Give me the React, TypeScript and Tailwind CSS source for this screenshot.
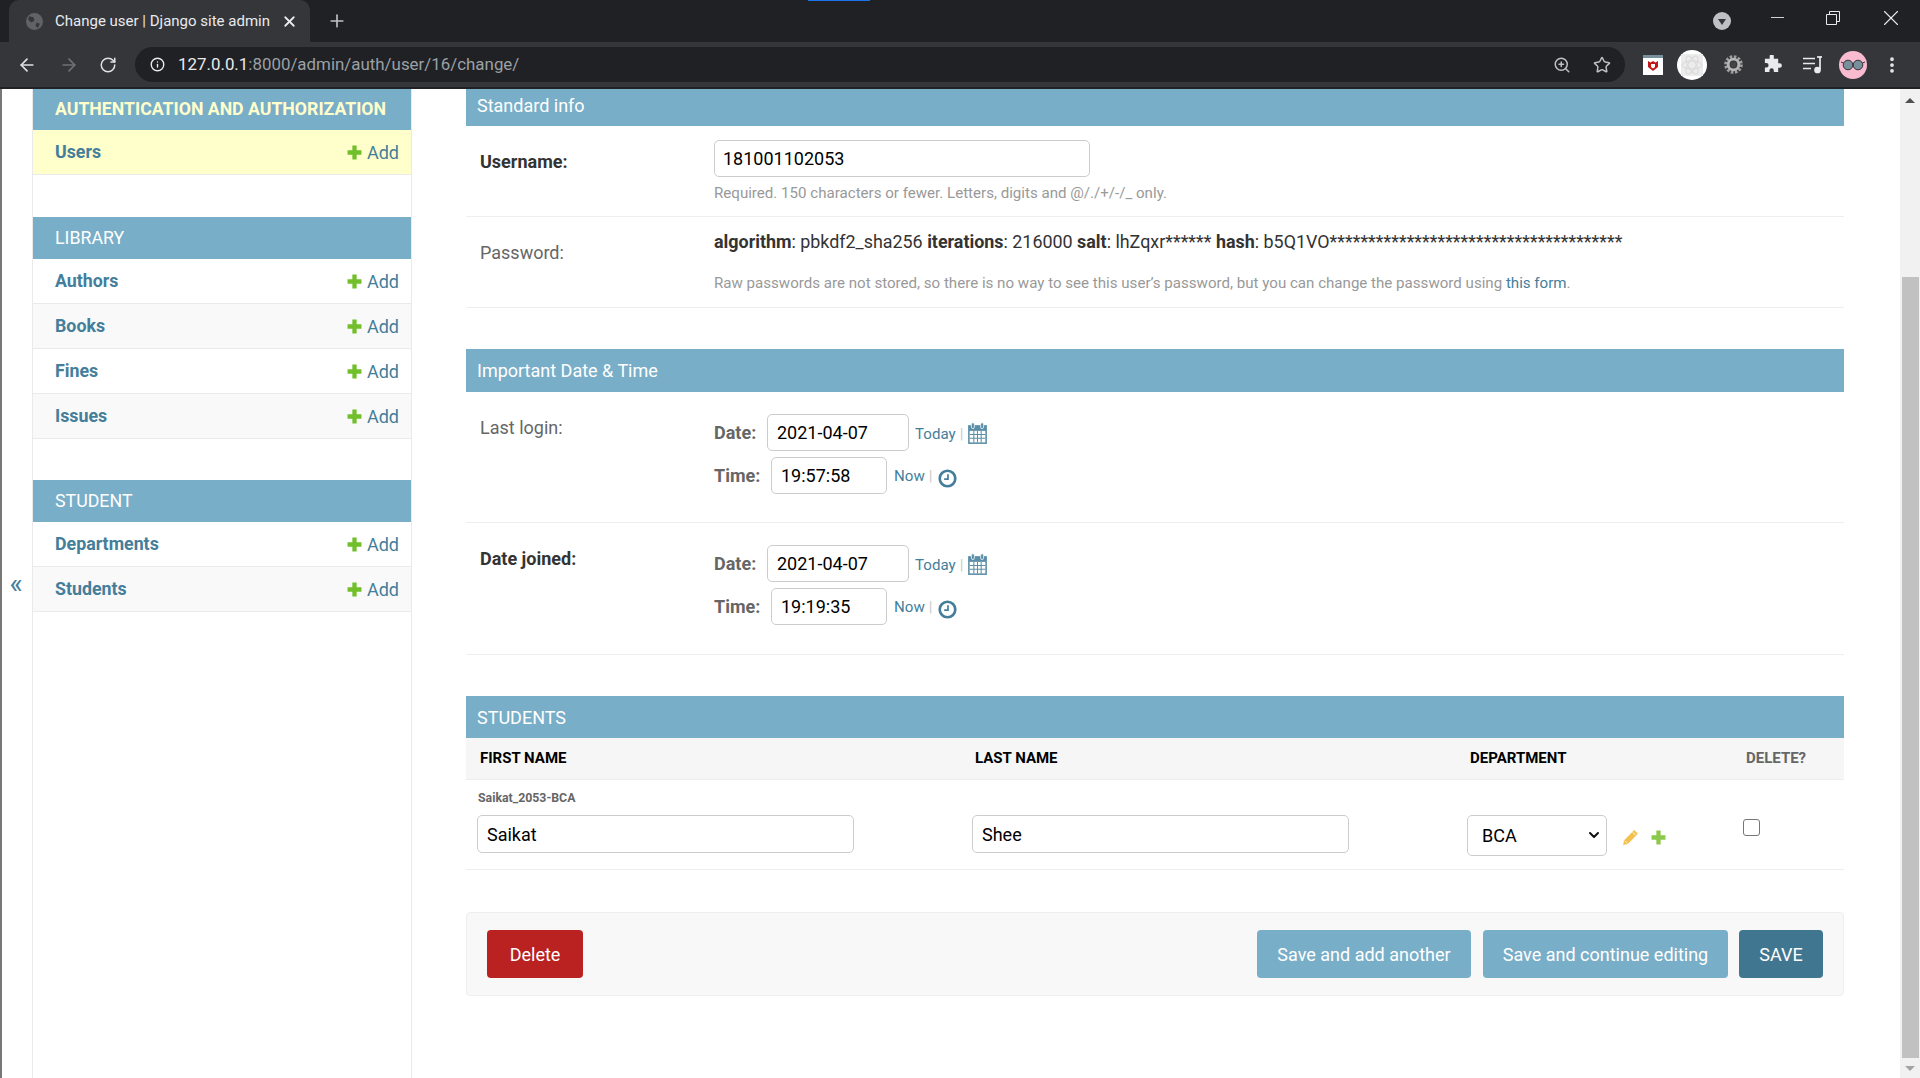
import React from "react";
import { ArrowLeft, ArrowRight, ChevronDown, RotateCw, Info, Star, ZoomIn, X, Plus, Minus, MoreVertical } from "lucide-react";

const roboto = "[font-family:Roboto,'Liberation_Sans',sans-serif]";

const PlusIcon = ({ className = "", fill = "#70bf2b" }: { className?: string; fill?: string }) => (
  <svg viewBox="0 0 14 14" className={className}>
    <path d="M5 0.500h4v4.500h4.500v4h-4.500v4.500h-4v-4.500h-4.500v-4h4.500z" fill={fill} />
  </svg>
);

const CalendarIcon = () => (
  <svg viewBox="0 0 20 22" className="w-[21px] h-[23px] ml-[4px] mt-[2px]">
    <path d="M1 3h18v18h-18z" fill="#5b8fa8" />
    <path d="M2.500 8.500h15v11h-15z" fill="#fff" />
    <path d="M2.500 12h15M2.500 15.500h15M6.500 8.500v11M10 8.500v11M13.500 8.500v11" stroke="#5b8fa8" strokeWidth="1" />
    <rect x="4.200" y="0.700" width="2.800" height="5.600" rx="1.400" fill="#5b8fa8" stroke="#fff" strokeWidth="0.700" />
    <rect x="13" y="0.700" width="2.800" height="5.600" rx="1.400" fill="#5b8fa8" stroke="#fff" strokeWidth="0.700" />
  </svg>
);

const ClockIcon = () => (
  <svg viewBox="0 0 20 20" className="w-[19px] h-[19px] ml-[6px] mt-[5px]">
    <circle cx="10" cy="10" r="8.200" fill="#fff" stroke="#447e9b" strokeWidth="2.800" />
    <path d="M10.500 5.500v5.200h-4" fill="none" stroke="#447e9b" strokeWidth="1.800" />
  </svg>
);

function SidebarRow({ name, alt, active }: { name: string; alt?: boolean; active?: boolean }) {
  return (
    <div
      className={`flex items-center justify-between h-[45px] border-b border-[#eaeaea] pl-[22px] pr-[12px] text-[18px] ${
        active ? "bg-[#ffffcc]" : alt ? "bg-[#f9f9f9]" : "bg-white"
      }`}
    >
      <span className="font-bold text-[#447e9b] text-[17.800px]">{name}</span>
      <span className="flex items-center text-[#447e9b] gap-[5px]">
        <PlusIcon className="w-[15px] h-[15px]" />
        Add
      </span>
    </div>
  );
}

function SidebarModule({
  title,
  rows,
  active,
  headerClass = "h-[42px]",
  className = "mb-[42px]",
}: {
  title: string;
  rows: string[];
  active?: boolean;
  headerClass?: string;
  className?: string;
}) {
  return (
    <div className={className}>
      <div
        className={`flex items-center bg-[#79aec8] pl-[22px] ${headerClass} ${
          active ? "font-bold text-[#ffffcc] text-[17.700px]" : "text-white text-[17.800px]"
        }`}
      >
        {title}
      </div>
      {rows.map((r, i) => (
        <SidebarRow key={r} name={r} alt={i % 2 === 1} active={active} />
      ))}
    </div>
  );
}

const SectionHeader = ({ title, className = "h-[42px]" }: { title: string; className?: string }) => (
  <div className={`flex items-center bg-[#79aec8] text-white text-[18px] pl-[11px] ${className}`}>{title}</div>
);

const textInput = "border border-[#cccccc] rounded-[5px] bg-white text-black text-[18px] outline-none";

function DateTimeRow({ date, time }: { date: string; time: string }) {
  return (
    <div className="flex flex-col gap-[6px] ml-[51px]">
      <div className="flex items-center h-[37px]">
        <span className="font-bold text-[18px] text-[#666] w-[53px]">Date:</span>
        <input readOnly value={date} className={`${textInput} pl-[9px] h-[37px] w-[142px]`} />
        <span className="ml-[6px] text-[15.100px] text-[#447e9b] mt-[3px]">Today</span>
        <span className="text-[15.100px] text-[#ccc] ml-[4px] mt-[3px]">|</span>
        <CalendarIcon />
      </div>
      <div className="flex items-center h-[37px]">
        <span className="font-bold text-[18px] text-[#666] w-[57px]">Time:</span>
        <input readOnly value={time} className={`${textInput} pl-[9px] h-[37px] w-[116px]`} />
        <span className="ml-[7px] text-[15.100px] text-[#447e9b] mt-[2px]">Now</span>
        <span className="text-[15.100px] text-[#ccc] ml-[4px] mt-[2px]">|</span>
        <ClockIcon />
      </div>
    </div>
  );
}

function BrowserChrome() {
  return (
    <div className="bg-[#202124] shrink-0">
      <div className="flex items-end h-[42px] pl-[9px] relative">
        <div className="flex items-center w-[301px] h-[42px] bg-[#35363a] rounded-t-[10px] pl-[17px] pr-[12px] text-[#e8eaed] text-[15px]">
          <svg viewBox="0 0 16 16" className="w-[17px] h-[17px] shrink-0 mr-[12px]">
            <circle cx="8" cy="8" r="8" fill="#5f6368" />
            <path d="M3 3l4 1 1 3-3 2-3-3zM10 9l3 1-2 4-2-2z" fill="#35363a" />
          </svg>
          <span className="whitespace-nowrap flex-1">Change user | Django site admin</span>
          <X size={17} strokeWidth={2.500} className="text-[#e8eaed]" />
        </div>
        <Plus size={20} strokeWidth={2} className="text-[#bdc1c6] ml-[17px] mb-[11px]" />
        <div className="absolute left-[808px] top-0 w-[62px] h-[1px] bg-[#1a73e8]" />
        <div className="ml-auto flex items-center h-[42px] text-[#e8eaed]">
          <svg viewBox="0 0 18 18" className="w-[18px] h-[18px] mr-[36px]">
            <circle cx="9" cy="9" r="9" fill="#bdc1c6" />
            <path d="M5 7h8l-4 6z" fill="#35363a" />
          </svg>
          <Minus size={21} strokeWidth={1} className="mr-[38px] -mt-[8px]" />
          <svg viewBox="0 0 14 14" className="w-[14px] h-[14px] mr-[38px] -mt-[6px]" fill="none" stroke="#e8eaed">
            <path d="M0.500 3.500h10v10h-10zM3.500 3.500v-3h10v10h-3" />
          </svg>
          <X size={26} strokeWidth={1} className="mr-[16px] -mt-[6px]" />
        </div>
      </div>
      <div className="flex items-center h-[47px] bg-[#35363a] border-b-2 border-[#202124] text-[#dee1e6]">
        <ArrowLeft size={20} className="ml-[17px]" />
        <ArrowRight size={20} className="ml-[22px] text-[#6f7175]" />
        <RotateCw size={18} className="ml-[20px]" />
        <div className="flex items-center ml-[18px] w-[1490px] h-[35px] bg-[#202124] rounded-full pl-[15px] pr-[14px]">
          <Info size={15} strokeWidth={2.200} className="text-[#e8eaed]" />
          <span className="ml-[13px] text-[16.900px] text-[#e8eaed]">
            127.0.0.1<span className="text-[#9aa0a6]">:8000/admin/auth/user/16/change/</span>
          </span>
          <ZoomIn size={18} className="ml-auto text-[#bdc1c6]" />
          <Star size={18} className="ml-[22px] text-[#bdc1c6]" />
        </div>
        <svg viewBox="0 0 20 20" className="w-[20px] h-[20px] ml-[18px]">
          <rect width="20" height="20" fill="#fff" />
          <rect width="20" height="3" fill="#78909c" />
          <path d="M5 6l2.500 1.500 2.500-1.500 2.500 1.500 2.500-1.500v6l-5 4-5-4z" fill="#c01818" />
          <path d="M8 9h4v3l-2 1.600-2-1.600z" fill="#fff" />
        </svg>
        <div className="flex items-center justify-center w-[30px] h-[30px] rounded-full bg-white ml-[14px]">
          <svg viewBox="0 0 24 24" className="w-[24px] h-[24px]" fill="none" stroke="#d8d8d8" strokeWidth="1">
            <rect x="1" y="1" width="22" height="22" fill="#ececec" stroke="none" />
            <ellipse cx="12" cy="12" rx="10" ry="4" />
            <ellipse cx="12" cy="12" rx="10" ry="4" transform="rotate(60 12 12)" />
            <ellipse cx="12" cy="12" rx="10" ry="4" transform="rotate(120 12 12)" />
          </svg>
        </div>
        <svg viewBox="0 0 20 20" className="w-[19px] h-[19px] ml-[17px]">
          <circle cx="10" cy="10" r="8" fill="none" stroke="#9e9e9e" strokeWidth="3.600" strokeDasharray="2.600 1.600" />
          <circle cx="10" cy="10" r="5.600" fill="none" stroke="#b5b5b5" strokeWidth="3" />
          <circle cx="10" cy="10" r="3" fill="#444" />
        </svg>
        <svg viewBox="0 0 20 20" className="w-[19px] h-[19px] ml-[20px]" fill="#e8eaed">
          <path d="M7 1.500a2.200 2.200 0 0 1 4.400 0V4h4.600v4.600h1.500a2.400 2.400 0 0 1 0 4.800H16V18h-4.600v-1.800a2.300 2.300 0 0 0-4.600 0V18H2v-4.900h1.500a2.400 2.400 0 0 0 0-4.800H2V4h5z" />
        </svg>
        <svg viewBox="0 0 20 20" className="w-[20px] h-[20px] ml-[21px]" fill="none" stroke="#e8eaed" strokeWidth="1.700">
          <path d="M0 3.500h12M0 8.500h12M0 13.500h8" />
          <path d="M17 1.500v13" />
          <path d="M14 2h5" />
          <circle cx="14.500" cy="15" r="2.500" fill="#e8eaed" />
        </svg>
        <div className="flex items-center justify-center w-[28px] h-[28px] rounded-full bg-[#f8bbd0] ml-[16px]">
          <svg viewBox="0 0 24 12" className="w-[24px] h-[12px]">
            <circle cx="7" cy="6" r="4.800" fill="#78909c" stroke="#333" strokeWidth="1" />
            <circle cx="17" cy="6" r="4.800" fill="#78909c" stroke="#333" strokeWidth="1" />
            <path d="M0 3l2.500 1M24 3l-2.500 1M11.500 5h1" stroke="#333" strokeWidth="1" />
          </svg>
        </div>
        <MoreVertical size={20} strokeWidth={2.500} className="ml-[15px] text-[#e8eaed]" />
      </div>
    </div>
  );
}

export default function App() {
  return (
    <div className={`h-screen w-full flex flex-col overflow-hidden bg-white text-[#333] ${roboto}`}>
      <BrowserChrome />
      <div className="flex flex-1 min-h-0 bg-white">
        <div className="w-[2px] bg-[#777]" />
        <div className="w-[31px] border-r border-[#eaeaea] flex items-center justify-center text-[#447e9b] text-[28px] pr-[2px]">
          «
        </div>
        <div className="w-[379px] shrink-0 border-r border-[#eaeaea]">
          <SidebarModule title="AUTHENTICATION AND AUTHORIZATION" rows={["Users"]} active headerClass="h-[41px]" />
          <SidebarModule title="LIBRARY" rows={["Authors", "Books", "Fines", "Issues"]} className="mb-[41px]" />
          <SidebarModule title="STUDENT" rows={["Departments", "Students"]} />
        </div>
        <div className="w-[1378px] ml-[54px] shrink-0 text-[18px]">
          <SectionHeader title="Standard info" className="h-[37px] pb-[5px]" />
          <div className="border-b border-[#eeeeee] h-[91px] flex px-[14px] pt-[14px]">
            <label className="w-[234px] font-bold pt-[8px]">Username:</label>
            <div>
              <input readOnly value="181001102053" className={`${textInput} pl-[8px] h-[37px] w-[376px]`} />
              <p className="text-[15.100px] text-[#999] mt-[5px]">
                Required. 150 characters or fewer. Letters, digits and @/./+/-/_ only.
              </p>
            </div>
          </div>
          <div className="border-b border-[#eeeeee] h-[91px] flex px-[14px] pt-[12px] mb-[41px]">
            <label className="w-[234px] text-[#666] pt-[10px]">Password:</label>
            <div>
              <p className="text-[17.900px]">
                <b>algorithm</b>: pbkdf2_sha256 <b>iterations</b>: 216000 <b>salt</b>: lhZqxr****** <b>hash</b>:{" "}
                b5Q1VO**************************************
              </p>
              <p className="text-[15.100px] text-[#999] mt-[16px]">
                Raw passwords are not stored, so there is no way to see this user’s password, but you can change the
                password using <span className="text-[#447e9b]">this form</span>.
              </p>
            </div>
          </div>
          <SectionHeader title="Important Date &amp; Time" className="h-[43px]" />
          <div className="border-b border-[#eeeeee] h-[131px] flex px-[14px] pt-[22px]">
            <label className="w-[183px] text-[#666]">Last login:</label>
            <DateTimeRow date="2021-04-07" time="19:57:58" />
          </div>
          <div className="border-b border-[#eeeeee] h-[132px] flex px-[14px] pt-[22px] mb-[41px]">
            <label className="w-[183px] font-bold">Date joined:</label>
            <DateTimeRow date="2021-04-07" time="19:19:35" />
          </div>
          <SectionHeader title="STUDENTS" />
          <div className="grid grid-cols-[495px_495px_277px_1fr] items-center h-[42px] bg-[#f6f6f6] border-b border-[#eeeeee] pl-[14px] text-[15px] font-bold text-black">
            <span>FIRST NAME</span>
            <span>LAST NAME</span>
            <span>DEPARTMENT</span>
            <span className="text-[#666] -ml-[1px]">DELETE?</span>
          </div>
          <div className="border-b border-[#eeeeee] h-[90px] pl-[11px] pt-[9px]">
            <div className="text-[12.300px] font-bold text-[#666] h-[26px] pl-[1px]">Saikat_2053-BCA</div>
            <div className="grid grid-cols-[495px_495px_277px_1fr] items-start">
              <input readOnly value="Saikat" className={`${textInput} pl-[9px] h-[38px] w-[377px]`} />
              <input readOnly value="Shee" className={`${textInput} pl-[9px] h-[38px] w-[377px]`} />
              <div className="flex items-center">
                <div className="relative">
                  <select className="appearance-none block w-[140px] h-[41px] border border-[#ccc] rounded-[5px] bg-white text-black text-[18px] pl-[14px]">
                    <option>BCA</option>
                  </select>
                  <ChevronDown
                    size={16}
                    strokeWidth={3}
                    className="absolute right-[5px] top-[12px] text-[#111] pointer-events-none"
                  />
                </div>
                <svg viewBox="0 0 16 16" className="w-[17px] h-[17px] ml-[15px] mt-[3px]" fill="#f2c14e">
                  <path d="M11.500 1l3.500 3.500-9.500 9.500-4.500 1 1-4.500z" />
                  <path d="M2.600 11l2.500 2.500M10 3l3 3" stroke="#fff" strokeWidth="0.800" />
                </svg>
                <PlusIcon className="w-[15px] h-[15px] ml-[12px] mt-[3px]" fill="#8cc84b" />
              </div>
              <input
                type="checkbox"
                readOnly
                className="appearance-none w-[17px] h-[17px] border border-[#767676] rounded-[3px] bg-white mt-[4px] -ml-[1px]"
              />
            </div>
          </div>
          <div className="mt-[42px] h-[84px] bg-[#f8f8f8] border border-[#eeeeee] rounded-[4px] flex items-center pl-[20px] pr-[20px]">
            <button className="w-[96px] h-[48px] rounded-[4px] bg-[#ba2121] text-white text-[18px]">Delete</button>
            <button className="ml-auto w-[214px] h-[48px] rounded-[4px] bg-[#79aec8] text-white text-[18px]">
              Save and add another
            </button>
            <button className="ml-[12px] w-[245px] h-[48px] rounded-[4px] bg-[#79aec8] text-white text-[18px]">
              Save and continue editing
            </button>
            <button className="ml-[11px] w-[84px] h-[48px] rounded-[4px] bg-[#417690] text-white text-[18px]">
              SAVE
            </button>
          </div>
        </div>
        <div className="ml-auto w-[20px] bg-[#f1f1f1] shrink-0 flex flex-col items-center">
          <div className="h-[22px] flex items-center justify-center">
            <div className="w-0 h-0 border-x-[5px] border-x-transparent border-b-[5px] border-b-[#505050]" />
          </div>
          <div className="h-[166px]" />
          <div className="w-[17px] h-[781px] bg-[#c1c1c1]" />
          <div className="flex-1 flex items-center justify-center">
            <div className="w-0 h-0 border-x-[5px] border-x-transparent border-t-[5px] border-t-[#a3a3a3]" />
          </div>
        </div>
      </div>
    </div>
  );
}
